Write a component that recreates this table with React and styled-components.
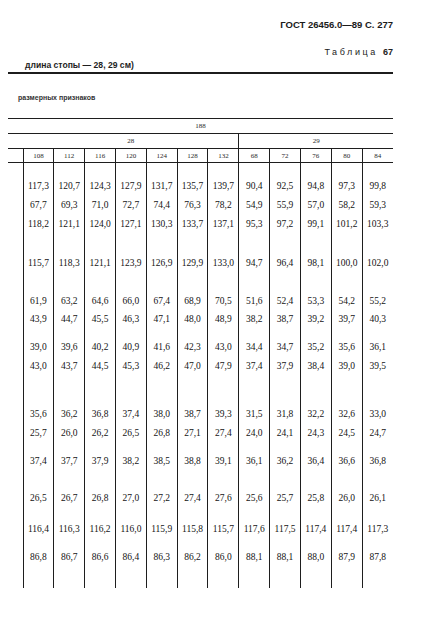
import React from 'react';
import styled, { createGlobalStyle } from 'styled-components';

const GlobalStyle = createGlobalStyle`
  html, body {
    margin: 0;
    padding: 0;
    background: #fff;
  }
  body {
    font-family: "Liberation Serif", "DejaVu Serif", serif;
    color: #141414;
  }
`;

const Page = styled.div`
  width: 424px;
  height: 632px;
  box-sizing: border-box;
  padding: 19px 31px 0 8px;
  overflow: hidden;
`;

const RunHead = styled.div`
  text-align: right;
  font-family: "Liberation Sans", Arial, sans-serif;
  font-weight: bold;
  font-size: 9.5px;
  line-height: 12px;
  color: #1a1a1a;
`;

const TableLabel = styled.div`
  margin-top: 15px;
  text-align: right;
  font-family: "Liberation Sans", Arial, sans-serif;
  font-size: 9px;
  line-height: 12px;
  letter-spacing: 2.6px;
  color: #222;

  b {
    letter-spacing: 0;
  }
`;

const Title = styled.div`
  margin-top: 1px;
  padding-left: 17px;
  font-family: "Liberation Sans", Arial, sans-serif;
  font-weight: bold;
  font-size: 8.6px;
  line-height: 12px;
  color: #1e1e1e;
`;

const Rule = styled.div`
  margin-top: 1px;
  height: 2px;
  background: #1c1c1c;
`;

const Subtitle = styled.div`
  margin-top: 19px;
  padding-left: 10px;
  font-family: "Liberation Sans", Arial, sans-serif;
  font-weight: bold;
  font-size: 7px;
  line-height: 10px;
  color: #333;
`;

const Grid = styled.table`
  margin-top: 15px;
  width: 385px;
  table-layout: fixed;
  border-collapse: collapse;
`;

const HeadCell = styled.td`
  height: ${(p) => p.$h}px;
  padding: 0;
  text-align: center;
  font-size: 7px;
  line-height: 10px;
  color: #2a2a2a;
  border-bottom: 1px solid #1e1e1e;
  border-top: ${(p) => (p.$top ? '1px solid #1e1e1e' : 'none')};
  border-left: ${(p) => (p.$ruled ? '1px solid #1e1e1e' : 'none')};
`;

const Cell = styled.td`
  padding: ${(p) => p.$gap}px 0 ${(p) => p.$tail || 0}px;
  text-align: center;
  font-size: 9.5px;
  line-height: 18px;
  white-space: nowrap;
  color: #141414;
  border-left: ${(p) => (p.$ruled ? '1px solid #1e1e1e' : 'none')};
`;

const sizes = ['108', '112', '116', '120', '124', '128', '132', '68', '72', '76', '80', '84'];

const rows = [
  ['117,3', '120,7', '124,3', '127,9', '131,7', '135,7', '139,7', '90,4', '92,5', '94,8', '97,3', '99,8'],
  ['67,7', '69,3', '71,0', '72,7', '74,4', '76,3', '78,2', '54,9', '55,9', '57,0', '58,2', '59,3'],
  ['118,2', '121,1', '124,0', '127,1', '130,3', '133,7', '137,1', '95,3', '97,2', '99,1', '101,2', '103,3'],
  ['115,7', '118,3', '121,1', '123,9', '126,9', '129,9', '133,0', '94,7', '96,4', '98,1', '100,0', '102,0'],
  ['61,9', '63,2', '64,6', '66,0', '67,4', '68,9', '70,5', '51,6', '52,4', '53,3', '54,2', '55,2'],
  ['43,9', '44,7', '45,5', '46,3', '47,1', '48,0', '48,9', '38,2', '38,7', '39,2', '39,7', '40,3'],
  ['39,0', '39,6', '40,2', '40,9', '41,6', '42,3', '43,0', '34,4', '34,7', '35,2', '35,6', '36,1'],
  ['43,0', '43,7', '44,5', '45,3', '46,2', '47,0', '47,9', '37,4', '37,9', '38,4', '39,0', '39,5'],
  ['35,6', '36,2', '36,8', '37,4', '38,0', '38,7', '39,3', '31,5', '31,8', '32,2', '32,6', '33,0'],
  ['25,7', '26,0', '26,2', '26,5', '26,8', '27,1', '27,4', '24,0', '24,1', '24,3', '24,5', '24,7'],
  ['37,4', '37,7', '37,9', '38,2', '38,5', '38,8', '39,1', '36,1', '36,2', '36,4', '36,6', '36,8'],
  ['26,5', '26,7', '26,8', '27,0', '27,2', '27,4', '27,6', '25,6', '25,7', '25,8', '26,0', '26,1'],
  ['116,4', '116,3', '116,2', '116,0', '115,9', '115,8', '115,7', '117,6', '117,5', '117,4', '117,4', '117,3'],
  ['86,8', '86,7', '86,6', '86,4', '86,3', '86,2', '86,0', '88,1', '88,1', '88,0', '87,9', '87,8'],
];

// space above each row, as the rows are grouped on the page
const gaps = [14, 1, 1, 21, 20, 0, 10, 1, 30, 1, 10, 19, 13, 10];

export default function App() {
  return (
    <>
      <GlobalStyle />
      <Page>
        <RunHead>ГОСТ 26456.0—89 С. 277</RunHead>
        <TableLabel>
          Таблица <b>67</b>
        </TableLabel>
        <Title>длина стопы — 28, 29 см)</Title>
        <Rule />
        <Subtitle>размерных признаков</Subtitle>

        <Grid>
          <colgroup>
            <col style={{ width: 15 }} />
            {sizes.map((s) => (
              <col key={s} />
            ))}
          </colgroup>
          <tbody>
            <tr>
              <HeadCell colSpan={13} $h={14} $top>
                188
              </HeadCell>
            </tr>
            <tr>
              <HeadCell $h={14} />
              <HeadCell colSpan={7} $h={14}>
                28
              </HeadCell>
              <HeadCell colSpan={5} $h={14} $ruled>
                29
              </HeadCell>
            </tr>
            <tr>
              <HeadCell $h={13} />
              {sizes.map((s) => (
                <HeadCell key={s} $h={13} $ruled>
                  {s}
                </HeadCell>
              ))}
            </tr>
            {rows.map((row, i) => (
              <tr key={i}>
                <Cell $gap={gaps[i]} $tail={i === rows.length - 1 ? 22 : 0} />
                {row.map((v, j) => (
                  <Cell key={j} $gap={gaps[i]} $tail={i === rows.length - 1 ? 22 : 0} $ruled>
                    {v}
                  </Cell>
                ))}
              </tr>
            ))}
          </tbody>
        </Grid>
      </Page>
    </>
  );
}
